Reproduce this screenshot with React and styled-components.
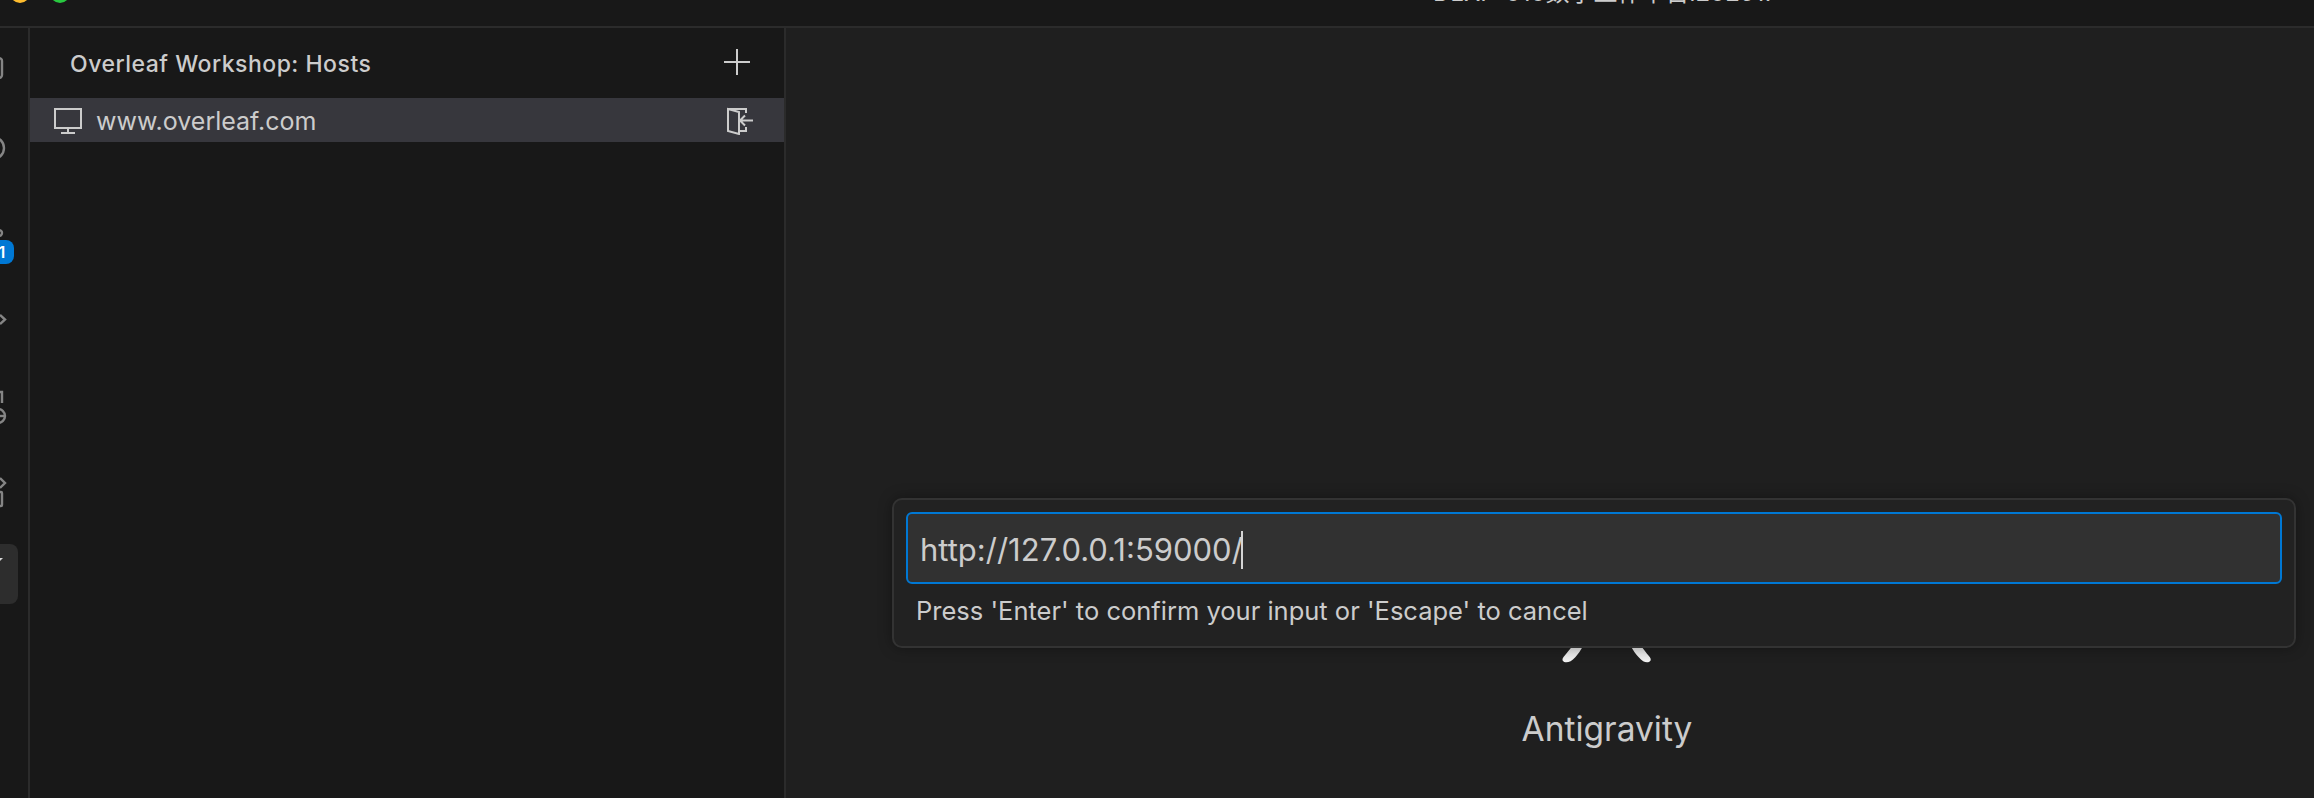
import React from 'react';
import styled, { createGlobalStyle } from 'styled-components';

const GlobalStyle = createGlobalStyle`
  html, body {
    margin: 0;
    height: 100%;
    overflow: hidden;
    background: #181818;
  }
  #root {
    height: 100%;
  }
`;

const Page = styled.div`
  height: 798px;
  display: flex;
  flex-direction: column;
  overflow: hidden;
  font-family: Inter, "Noto Sans CJK SC", sans-serif;
  color: #cccccc;
`;

const TitleBar = styled.header`
  flex: 0 0 28px;
  box-sizing: border-box;
  display: flex;
  align-items: flex-start;
  overflow: hidden;
  background: #181818;
  border-bottom: 2px solid #2b2b2b;
`;

const Lights = styled.div`
  display: flex;
  gap: 20px;
  margin: -17px 0 0 10px;
`;

const Light = styled.span`
  width: 20px;
  height: 20px;
  border-radius: 50%;
  background: ${p => p.$color};
`;

const WindowTitle = styled.div`
  margin: -20px 0 0 1363px;
  font-size: 24px;
  line-height: 26px;
  white-space: nowrap;
  color: #cccccc;
`;

const Body = styled.div`
  flex: 1;
  display: flex;
  min-height: 0;
  position: relative;
`;

const ActivityBar = styled.nav`
  flex: 0 0 30px;
  box-sizing: border-box;
  display: flex;
  flex-direction: column;
  overflow: hidden;
  background: #181818;
  border-right: 2px solid #2b2b2b;
`;

const Slot = styled.div`
  position: relative;
  flex: 0 0 84px;
  display: flex;
  align-items: center;
`;

const SlotIcon = styled.svg`
  display: block;
  width: 28px;
  height: 84px;
  overflow: hidden;
  fill: none;
  stroke: #858585;
  stroke-width: 2.4;
`;

const Badge = styled.span`
  position: absolute;
  top: 44px;
  left: -10px;
  width: 24px;
  height: 24px;
  border-radius: 8px;
  background: #0078d4;
  color: #ffffff;
  font-size: 16px;
  font-weight: 600;
  line-height: 24px;
  text-align: center;
`;

const ActiveTile = styled.div`
  width: 30px;
  height: 60px;
  margin: -1px 0 0 -12px;
  padding-top: 14px;
  box-sizing: border-box;
  border-radius: 8px;
  background: #2d2d2d;
`;

const Caret = styled.svg`
  display: block;
  width: 15px;
  height: 7px;
  fill: #d8d8d8;
`;

const SideBar = styled.aside`
  flex: 0 0 756px;
  box-sizing: border-box;
  background: #181818;
  border-right: 2px solid #2b2b2b;
`;

const SideHeader = styled.div`
  height: 70px;
  box-sizing: border-box;
  display: flex;
  align-items: center;
  justify-content: space-between;
  padding: 0 33px 0 40px;
  font-size: 23px;
  font-weight: 500;
  letter-spacing: 0.5px;
`;

const HeaderTitle = styled.span`
  padding-top: 2px;
`;

const HostRow = styled.div`
  height: 44px;
  box-sizing: border-box;
  display: flex;
  align-items: center;
  gap: 14px;
  padding: 1px 30px 0 24px;
  background: #37373d;
  font-size: 25px;
`;

const HostName = styled.span`
  flex: 1;
`;

const LineIcon = styled.svg`
  display: block;
  flex: none;
  width: ${p => p.$size}px;
  height: ${p => p.$size}px;
  fill: none;
  stroke: #cccccc;
  stroke-width: 2;
`;

const Main = styled.main`
  flex: 1;
  display: flex;
  flex-direction: column;
  justify-content: flex-end;
  background: #1f1f1f;
`;

const Watermark = styled.div`
  width: 240px;
  margin: 0 0 49px 701px;
  display: flex;
  flex-direction: column;
  align-items: center;
  gap: 46px;
`;

const Logo = styled.svg`
  display: block;
  width: 90px;
  height: 110px;
`;

const ProductName = styled.div`
  font-size: 33.500px;
  line-height: 40px;
  color: #cccccc;
`;

const QuickInput = styled.div`
  position: absolute;
  top: 470px;
  left: 892px;
  width: 1404px;
  height: 150px;
  box-sizing: border-box;
  padding: 12px 12px 0;
  background: #222222;
  border: 2px solid #333333;
  border-radius: 10px;
  box-shadow: 0 0 14px rgba(0, 0, 0, 0.35);
`;

const InputBox = styled.div`
  height: 72px;
  box-sizing: border-box;
  display: flex;
  align-items: center;
  padding: 3px 0 0 12px;
  background: #313131;
  border: 2px solid #0078d4;
  border-radius: 6px;
  font-size: 31px;
`;

const Cursor = styled.span`
  width: 2px;
  height: 38px;
  margin-left: -2px;
  background: #d4d4d4;
`;

const Hint = styled.div`
  margin: 12px 0 0 10px;
  font-size: 25.500px;
  line-height: 30px;
`;

export default function App() {
  return (
    <Page>
      <GlobalStyle />
      <TitleBar>
        <Lights>
          <Light $color="#febc2e" />
          <Light $color="#28c840" />
        </Lights>
        <WindowTitle>DLXP-010数字工作平台i202517</WindowTitle>
      </TitleBar>
      <Body>
        <ActivityBar>
          <Slot>
            <SlotIcon viewBox="0 0 28 84">
              <rect x="-20" y="30" width="22" height="20" rx="3" />
            </SlotIcon>
          </Slot>
          <Slot>
            <SlotIcon viewBox="0 0 28 84">
              <circle cx="-7" cy="36" r="11" />
            </SlotIcon>
          </Slot>
          <Slot>
            <SlotIcon viewBox="0 0 28 84">
              <circle cx="-1" cy="37" r="3" />
            </SlotIcon>
            <Badge>1</Badge>
          </Slot>
          <Slot>
            <SlotIcon viewBox="0 0 28 84">
              <polyline points="0,35 5,39.5 0,44" />
            </SlotIcon>
          </Slot>
          <Slot>
            <SlotIcon viewBox="0 0 28 84">
              <path d="M-8 28h10v11" />
              <circle cx="-2" cy="52" r="7" />
              <path d="M-2 52h7" />
            </SlotIcon>
          </Slot>
          <Slot>
            <SlotIcon viewBox="0 0 28 84">
              <polyline points="0,30 5,35 0,40" />
              <rect x="-10" y="44" width="12" height="14" rx="1" />
            </SlotIcon>
          </Slot>
          <Slot>
            <ActiveTile>
              <Caret viewBox="0 0 15 7">
                <polygon points="0,0 15,0 8,7" />
              </Caret>
            </ActiveTile>
          </Slot>
        </ActivityBar>
        <SideBar>
          <SideHeader>
            <HeaderTitle>Overleaf Workshop: Hosts</HeaderTitle>
            <LineIcon $size={28} viewBox="0 0 28 28">
              <path d="M14 0v26M1 13h26" />
            </LineIcon>
          </SideHeader>
          <HostRow>
            <LineIcon $size={28} viewBox="0 0 28 28">
              <rect x="1" y="2" width="26" height="19" />
              <path d="M14 21v5M7 26h14" />
            </LineIcon>
            <HostName>www.overleaf.com</HostName>
            <LineIcon $size={28} viewBox="0 0 28 28">
              <path d="M2 2l11 3v22l-11-3z" />
              <path d="M2 2h18v4M13 24h7v-4" />
              <path d="M27 13.500h-13M19 8.500l-5 5 5 5" />
            </LineIcon>
          </HostRow>
        </SideBar>
        <Main>
          <Watermark>
            <Logo viewBox="0 0 120 110" preserveAspectRatio="none">
              <defs>
                <linearGradient id="petal" x1="0" y1="0" x2="0" y2="1">
                  <stop offset="0" stopColor="#9a9a9a" />
                  <stop offset="1" stopColor="#f2f2f2" />
                </linearGradient>
              </defs>
              <path
                fill="url(#petal)"
                d="M3 109c-3-1-3-3-1-5 10-9 18-16 24-27 10-20 20-70 34-70s24 50 34 70c6 11 12 17 23 27 2 2 2 4-1 5-4 1-8 0-14-5-14-10-26-44-42-44s-28 34-42 44c-6 5-11 6-15 5z"
              />
            </Logo>
            <ProductName>Antigravity</ProductName>
          </Watermark>
        </Main>
        <QuickInput>
          <InputBox>
            http://127.0.0.1:59000/
            <Cursor />
          </InputBox>
          <Hint>Press 'Enter' to confirm your input or 'Escape' to cancel</Hint>
        </QuickInput>
      </Body>
    </Page>
  );
}
